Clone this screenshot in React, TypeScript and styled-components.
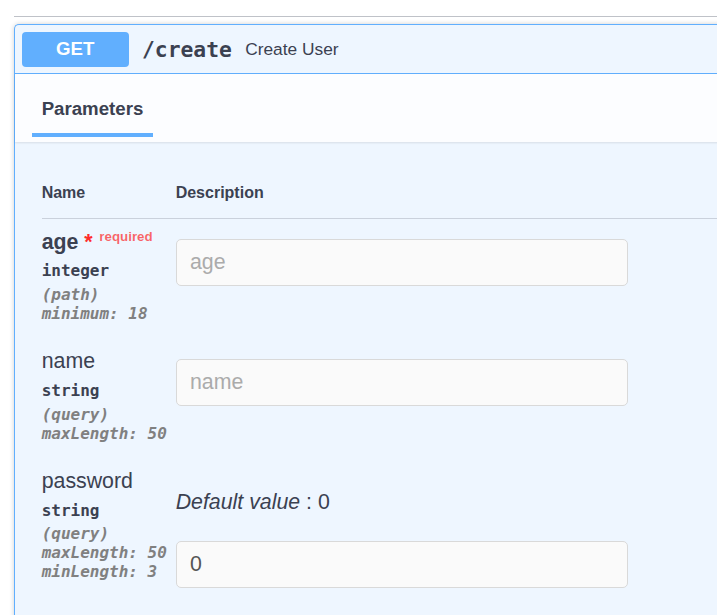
import React from "react";
import styled, { createGlobalStyle } from "styled-components";

const GlobalStyle = createGlobalStyle`
  html, body {
    margin: 0;
    padding: 0;
    background: #ffffff;
    overflow: hidden;
  }
  body {
    font-family: "Liberation Sans", Arial, sans-serif;
    color: #3b4151;
  }
`;

interface Param {
  name: string;
  type: string;
  location: string;
  rules: string[];
  required?: boolean;
  placeholder?: string;
  defaultValue?: string;
}

const params: Param[] = [
  {
    name: "age",
    type: "integer",
    location: "path",
    rules: ["minimum: 18"],
    required: true,
    placeholder: "age",
  },
  {
    name: "name",
    type: "string",
    location: "query",
    rules: ["maxLength: 50"],
    placeholder: "name",
  },
  {
    name: "password",
    type: "string",
    location: "query",
    rules: ["maxLength: 50", "minLength: 3"],
    defaultValue: "0",
  },
];

const App: React.FC = () => {
  return (
    <>
      <GlobalStyle />
      <Page>
        <TagDivider />
        <OpBlock>
          <Summary>
            <MethodBadge>GET</MethodBadge>
            <Path>/create</Path>
            <SummaryText>Create User</SummaryText>
          </Summary>
          <TabHeader>
            <Tab>Parameters</Tab>
          </TabHeader>
          <TableContainer>
            <ParamTable>
              <HeadCell>Name</HeadCell>
              <HeadCell>Description</HeadCell>
              {params.map((p) => (
                <React.Fragment key={p.name}>
                  <NameCell>
                    <ParamName $required={p.required}>
                      {p.name}
                      {p.required && (
                        <>
                          <Asterisk>&nbsp;*</Asterisk>
                          <RequiredLabel>required</RequiredLabel>
                        </>
                      )}
                    </ParamName>
                    <ParamType>{p.type}</ParamType>
                    <ParamMeta>({p.location})</ParamMeta>
                    {p.rules.map((r) => (
                      <ParamMeta key={r}>{r}</ParamMeta>
                    ))}
                  </NameCell>
                  <DescCell>
                    {p.defaultValue !== undefined && (
                      <DefaultValue>
                        <i>Default value</i> : {p.defaultValue}
                      </DefaultValue>
                    )}
                    <ParamInput
                      $afterText={p.defaultValue !== undefined}
                      placeholder={p.placeholder}
                      defaultValue={p.defaultValue}
                    />
                  </DescCell>
                </React.Fragment>
              ))}
            </ParamTable>
          </TableContainer>
        </OpBlock>
      </Page>
    </>
  );
};

export default App;

const Page = styled.div`
  padding: 16px 0 0 14px;
  width: 760px;
`;

const TagDivider = styled.div`
  height: 1px;
  background: #bfc2c8;
  margin-bottom: 7px;
`;

const OpBlock = styled.div`
  border: 1px solid #61affe;
  border-right: none;
  border-bottom: none;
  border-top-left-radius: 5px;
  background: #eef6ff;
  box-shadow: 0 0 5px rgba(0, 0, 0, 0.19);
  min-height: 640px;
`;

const Summary = styled.div`
  display: flex;
  align-items: center;
  padding: 6.67px;
  border-bottom: 1px solid #61affe;
`;

const MethodBadge = styled.div`
  width: 107px;
  height: 35px;
  display: flex;
  align-items: center;
  justify-content: center;
  border-radius: 4px;
  background: #61affe;
  color: #ffffff;
  font-size: 18.67px;
  font-weight: 700;
  flex-shrink: 0;
`;

const Path = styled.span`
  padding: 0 13.33px;
  font-family: "DejaVu Sans Mono", monospace;
  font-size: 21.33px;
  font-weight: 700;
  color: #3b4151;
`;

const SummaryText = styled.span`
  font-size: 17.33px;
  color: #3b4151;
`;

const TabHeader = styled.div`
  display: flex;
  padding: 24px 26.67px 5px;
  background: rgba(255, 255, 255, 0.8);
  box-shadow: 0 1px 2px rgba(0, 0, 0, 0.1);
`;

const Tab = styled.div`
  margin-left: -10px;
  padding: 0 10px 12.7px;
  border-bottom: 4px solid #61affe;
  font-size: 18.67px;
  font-weight: 700;
  color: #3b4151;
`;

const TableContainer = styled.div`
  padding: 26px 26.67px 20px;
`;

const ParamTable = styled.div`
  display: grid;
  grid-template-columns: 134px 1fr;
`;

const HeadCell = styled.div`
  padding: 16px 0;
  border-bottom: 1px solid rgba(59, 65, 81, 0.2);
  font-size: 16px;
  font-weight: 700;
  color: #3b4151;
`;

const NameCell = styled.div`
  padding: 10.5px 0 16px;
`;

const DescCell = styled.div`
  padding: 10.5px 0 16px;
`;

const ParamName = styled.div<{ $required?: boolean }>`
  font-size: 21.33px;
  font-weight: ${({ $required }) => ($required ? 700 : 400)};
  color: #3b4151;
  white-space: nowrap;
`;

const Asterisk = styled.span`
  color: #ff2a2a;
`;

const RequiredLabel = styled.span`
  position: relative;
  top: -8px;
  padding: 6.67px;
  font-size: 13.33px;
  font-weight: 700;
  color: rgba(255, 0, 0, 0.6);
`;

const ParamType = styled.div`
  padding: 6.67px 0 4.67px;
  font-family: "DejaVu Sans Mono", monospace;
  font-size: 16px;
  line-height: 19px;
  font-weight: 700;
  color: #3b4151;
`;

const ParamMeta = styled.div`
  font-family: "DejaVu Sans Mono", monospace;
  font-size: 16px;
  line-height: 19px;
  font-style: italic;
  font-weight: 700;
  color: #808080;
  white-space: nowrap;
`;

const DefaultValue = styled.p`
  margin: 21.33px 0 0;
  font-size: 21.33px;
  color: #3b4151;
`;

const ParamInput = styled.input<{ $afterText?: boolean }>`
  display: block;
  box-sizing: border-box;
  width: 452px;
  height: 47px;
  margin-top: ${({ $afterText }) => ($afterText ? "25.4px" : "9.4px")};
  padding: 0 13.33px;
  border: 1px solid #d9d9d9;
  border-radius: 5px;
  background: #fafafa;
  font-family: "Liberation Sans", Arial, sans-serif;
  font-size: 21.33px;
  color: #555555;
  outline: none;

  &::placeholder {
    color: #ababab;
  }
`;
